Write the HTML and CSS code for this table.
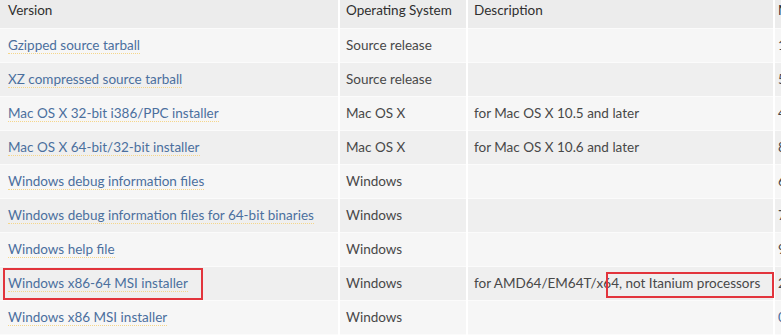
FILE: index.html
```html
<!DOCTYPE html>
<html lang="en">
    <head>
        <meta charset="UTF-8">
        <title>Files</title>
        <link rel="stylesheet" href="styles.css">
    </head>
    <body>
        <div class="files">
            <table class="files-table">
                <thead>
                    <tr>
                        <th class="col-version">Version</th>
                        <th class="col-os">Operating System</th>
                        <th class="col-desc">Description</th>
                        <th class="col-size">MD5 Sum</th>
                    </tr>
                </thead>
                <tbody>
                    <tr>
                        <td><a href="#">Gzipped source tarball</a></td>
                        <td>Source release</td>
                        <td></td>
                        <td>1</td>
                    </tr>
                    <tr>
                        <td><a href="#">XZ compressed source tarball</a></td>
                        <td>Source release</td>
                        <td></td>
                        <td>5</td>
                    </tr>
                    <tr>
                        <td><a href="#">Mac OS X 32-bit i386/PPC installer</a></td>
                        <td>Mac OS X</td>
                        <td>for Mac OS X 10.5 and later</td>
                        <td>4</td>
                    </tr>
                    <tr>
                        <td><a href="#">Mac OS X 64-bit/32-bit installer</a></td>
                        <td>Mac OS X</td>
                        <td>for Mac OS X 10.6 and later</td>
                        <td>8</td>
                    </tr>
                    <tr>
                        <td><a href="#">Windows debug information files</a></td>
                        <td>Windows</td>
                        <td></td>
                        <td>6</td>
                    </tr>
                    <tr>
                        <td><a href="#">Windows debug information files for 64-bit binaries</a></td>
                        <td>Windows</td>
                        <td></td>
                        <td>7</td>
                    </tr>
                    <tr>
                        <td><a href="#">Windows help file</a></td>
                        <td>Windows</td>
                        <td></td>
                        <td>9</td>
                    </tr>
                    <tr>
                        <td><a href="#">Windows x86-64 MSI installer</a></td>
                        <td>Windows</td>
                        <td>for AMD64/EM64T/x64, not Itanium processors</td>
                        <td>2</td>
                    </tr>
                    <tr>
                        <td><a href="#">Windows x86 MSI installer</a></td>
                        <td>Windows</td>
                        <td></td>
                        <td class="link-num">0</td>
                    </tr>
                </tbody>
            </table>

            <!-- red annotation boxes -->
            <span class="mark mark-file"></span>
            <span class="mark mark-desc"></span>
        </div>
    </body>
</html>
```

FILE: styles.css
```css
/* Reset default styles */
* {
  margin: 0;
  padding: 0;
  box-sizing: border-box;
}

body {
  font-family: 'Lato', 'Liberation Sans', sans-serif;
  font-size: 13.5px;
  color: #484848;
  background-color: #ffffff;
  overflow: hidden;
}

.files {
  position: relative;
  width: 782px;
  overflow: hidden;
}

.files-table {
  border-collapse: collapse;
  table-layout: fixed;
  width: 782px;
}

.files-table th,
.files-table td {
  text-align: left;
  font-weight: normal;
  white-space: nowrap;
  overflow: hidden;
  border-right: 2px solid #ffffff;
  border-bottom: 1px solid #fbfbfb;
  padding: 0 6px 2px;
  line-height: 20px;
}

.files-table th {
  color: #2f2f2f;
  background-color: #ececec;
  height: 28px;
  padding-bottom: 8px;
}

.col-version { width: 339px; }
.col-os { width: 128px; }
.col-desc { width: 307px; }
.col-size { width: 8px; }

.files-table td {
  height: 34px;
}

.files-table tbody tr:nth-child(odd) td {
  background-color: #f6f6f6;
}

.files-table tbody tr:nth-child(even) td {
  background-color: #efefef;
}

.files-table th:first-child,
.files-table td:first-child {
  padding-left: 8px;
}

.files-table th:last-child,
.files-table td:last-child {
  padding: 0 0 2px 3px;
  text-overflow: clip;
}

.files-table th:last-child {
  padding-bottom: 8px;
}

.files-table a {
  color: #4b6f9e;
  text-decoration: none;
  border-bottom: 1px dotted #f5d68a;
}

.link-num {
  color: #4b6f9e;
}

/* Red annotation boxes */
.mark {
  position: absolute;
  border: 2px solid #e2343c;
}

.mark-file {
  left: 3px;
  top: 268px;
  width: 200px;
  height: 32px;
}

.mark-desc {
  left: 606px;
  top: 272px;
  width: 168px;
  height: 26px;
}
```
